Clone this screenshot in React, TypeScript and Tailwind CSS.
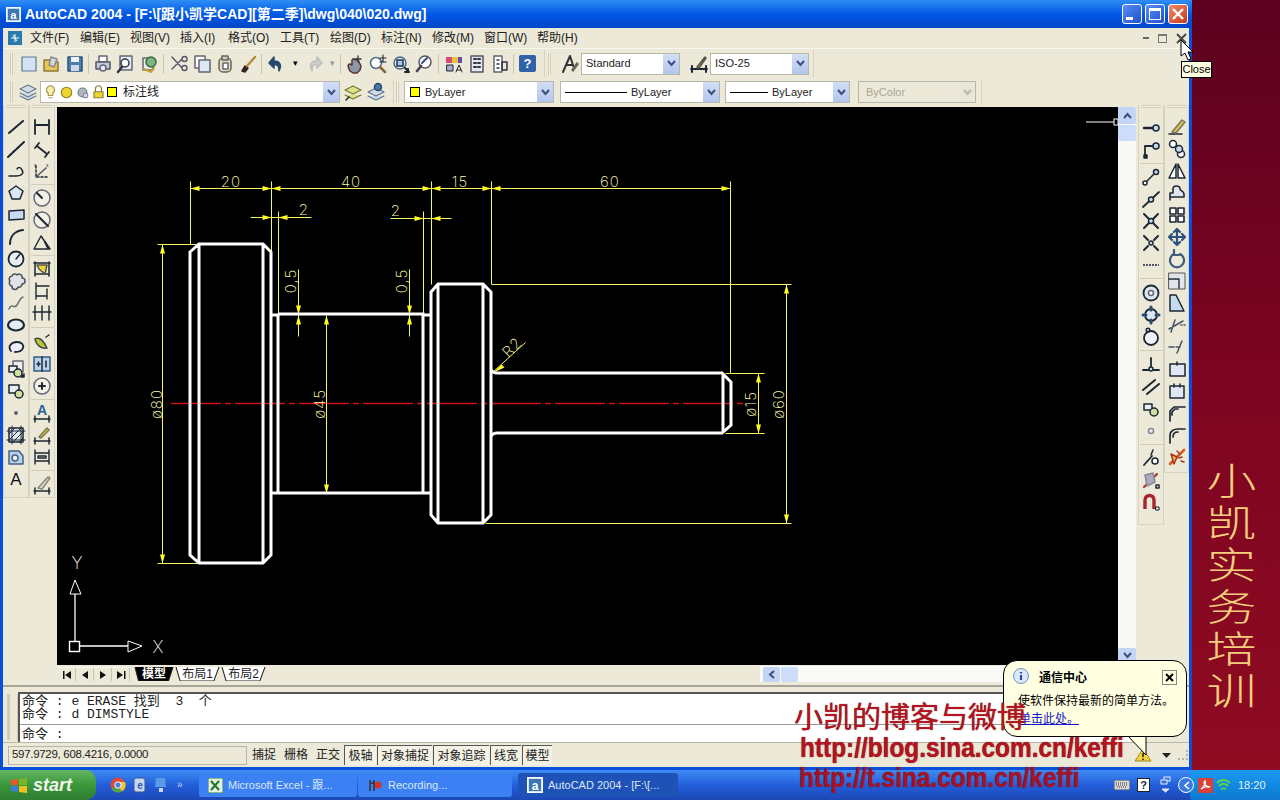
import React from "react";

const Ic = ({ children, s = 20 }: { children: React.ReactNode; s?: number }) => (
  <svg width={s} height={s} viewBox="0 0 20 20" fill="none" stroke="#1c2733" strokeWidth={1.5} strokeLinecap="round" strokeLinejoin="round">
    {children}
  </svg>
);

const yel = "#e6d63c";

// left toolbars
const drawIcons = [
  <path d="M3 16L17 4M3 16h.1M17 4h.1" strokeWidth={2} />,
  <path d="M2 18L18 3M7 13l6-5" strokeWidth={2} />,
  <path d="M3 15h7c6 0 8-3 6-6-1-3-4-3-5-1M3 15h.1" />,
  <path d="M10 3l7 5-3 8H6L3 8z" fill="#d9e6f4" />,
  <path d="M3 6l15-1v9l-15 1z" fill="#c7dbf0" />,
  <path d="M4 17C4 9 9 4 17 3" strokeWidth={2} />,
  <><circle cx="10" cy="10" r="7.5" fill="#e9eef4" strokeWidth={1.8} /><path d="M10 10l4-5" /></>,
  <path d="M6 5a3 3 0 0 1 5-1 3 3 0 0 1 5 3 3 3 0 0 1 0 6 3 3 0 0 1-4 3 3 3 0 0 1-6-1 3 3 0 0 1-2-5 3 3 0 0 1 2-5z" fill="#dfe3e6" stroke="#4a5560" />,
  <path d="M3 16c3-7 5 1 8-4s3-7 6-8" stroke="#68707a" />,
  <ellipse cx="10" cy="10" rx="8" ry="5.5" fill="#e4ecf5" strokeWidth={2.2} />,
  <path d="M5 14C1 9 6 5 11 5c5 0 7 3 6 6-1 3-5 4-8 4" strokeWidth={1.8} fill="#eef" />,
  <><rect x="7" y="2" width="10" height="11" fill="#eee" stroke="#667" /><rect x="3" y="7" width="8" height="6" fill="#e9eef4" /><circle cx="12" cy="14" r="4" fill="#cde0a0" /><path d="M15 18l3-3v3z" fill="#000" /></>,
  <><rect x="3" y="4" width="10" height="8" fill="#e9eef4" /><circle cx="13" cy="13" r="4" fill="#cde0a0" /></>,
  <circle cx="10" cy="10" r="1.2" fill="#1c2733" stroke="#667" />,
  <><rect x="3" y="3" width="14" height="14" fill="#dfe7f0" /><path d="M3 9l6-6M3 15L15 3M7 17L17 7M13 17l4-4M1 6h18M1 15h18M6 1v18M15 1v18" strokeWidth={1} /></>,
  <><path d="M3 4h10l4 5v8H3z" fill="#b9d0ea" stroke="#46617e" /><circle cx="9" cy="11" r="3" fill="#eef3f8" stroke="#46617e" /></>,
  <text x="10" y="16" fontSize="17" textAnchor="middle" fontFamily="Liberation Sans, sans-serif" fill="#111" stroke="none">A</text>,
];

const dimBase = <path d="M2 16h16M3 13v6M17 13v6" />;
const dimIcons = [
  [
    <path d="M3 3v14M17 3v14M3 8h14" strokeWidth={1.8} />,
    <path d="M3 9l4-5M13 18l4-5M5 7l10 8" strokeWidth={1.8} />,
    <><path d="M4 5v11h12" strokeDasharray="2 2" /><path d="M4 16l10-9" stroke="#556" /><text x="2" y="6" fontSize="5" stroke="none" fill="#222">x</text><text x="14" y="6" fontSize="5" stroke="none" fill="#222">x</text></>,
  ],
  [
    <><circle cx="10" cy="10" r="8" fill="#f3f1e6" stroke="#667" /><path d="M10 10L5 5" strokeWidth={2} /></>,
    <><circle cx="10" cy="10" r="8" fill="#f3f1e6" stroke="#667" /><path d="M4 4l12 12" strokeWidth={2} /></>,
    <><path d="M2 17h16L9 4 2 17" strokeWidth={1.4} /><path d="M13 10l3 6" strokeWidth={2} /></>,
  ],
  [
    <><path d="M2 4h16M3 3v14M17 3v14M3 15h14" /><path d="M5 6h10l-2 9-6-5z" fill={yel} stroke="#554" /></>,
    <path d="M4 2v16M15 8v10M4 5h13M4 15h11" strokeWidth={1.4} />,
    <path d="M3 3v14M10 3v14M17 3v14M1 9h18" strokeWidth={1.4} />,
  ],
  [
    <><path d="M3 7c5-3 9 3 12 9-6 1-11-3-12-9z" fill="#b6c72f" stroke="#445" /><path d="M14 5l3-2" /></>,
    <><rect x="2" y="3" width="16" height="14" fill="#b9d3ef" stroke="#39597c" /><path d="M10 3v14M5 10h3M6.5 8v4M14 7v6" /></>,
    <><circle cx="10" cy="10" r="8" fill="#f3f1e6" stroke="#667" /><path d="M7 10h6M10 7v6" strokeWidth={2} /></>,
  ],
  [
    <>{dimBase}<text x="10" y="12" fontSize="14" fontWeight="700" textAnchor="middle" fontFamily="Liberation Sans, sans-serif" fill="#2a5f96" stroke="none">A</text></>,
    <>{dimBase}<path d="M7 12L15 3l2 2-8 8z" fill="#e8c640" stroke="#775" /></>,
    <path d="M3 3v14M17 3v14M3 6h14M3 14h14M6 9h8v2H6z" strokeWidth={1.4} />,
  ],
  [<>{dimBase}<path d="M6 13L16 2l2 1-8 11z" fill="#ddd" stroke="#887" /></>],
];

// right toolbars
const snapIcons = [
  [
    <><path d="M3 10h10" strokeWidth={2.4} /><circle cx="15" cy="10" r="3" fill="#c7dbf0" /></>,
    <><path d="M4 17V6h8" strokeDasharray="2 1" strokeWidth={1.8} /><circle cx="15" cy="6" r="3" fill="#c7dbf0" /><rect x="3" y="15" width="3" height="3" fill="#222" /></>,
  ],
  [
    <><path d="M3 17L15 5" /><circle cx="4" cy="16" r="2" fill="#fff" /><circle cx="15" cy="5" r="2.5" fill="#c7dbf0" /></>,
    <><path d="M2 18L18 3" strokeWidth={1.8} /><circle cx="10" cy="10.5" r="2.5" fill="#c7dbf0" /></>,
    <><path d="M3 3l14 14M17 3L3 17" strokeWidth={2} /><circle cx="10" cy="10" r="2.5" fill="#c7dbf0" /></>,
    <><path d="M3 3l4 4M13 13l4 4M17 3l-4 4M7 13l-4 4" strokeWidth={2} /><circle cx="10" cy="10" r="2" fill="#c7dbf0" /></>,
    <path d="M2 10h16" strokeWidth={1.8} strokeDasharray="2 1" stroke="#556" strokeLinecap="butt" />,
  ],
  [
    <><circle cx="10" cy="10" r="7.5" fill="#dbe7f3" strokeWidth={1.8} /><circle cx="10" cy="10" r="2.5" fill="#fff" stroke="#667" /></>,
    <><circle cx="10" cy="10" r="6" fill="#dbe7f3" strokeWidth={1.8} /><path d="M10 2v3M10 15v3M2 10h3M15 10h3" strokeWidth={3} stroke="#2a4d70" /></>,
    <><circle cx="10" cy="11" r="7" fill="#eef3f8" strokeWidth={1.8} /><circle cx="7" cy="3" r="1.8" fill="#c7dbf0" /></>,
  ],
  [
    <><path d="M10 3v12M2 15h16" strokeWidth={1.8} /><circle cx="10" cy="14" r="2" fill="#c7dbf0" /></>,
    <path d="M2 13L14 3M6 17L18 7" strokeWidth={2} />,
    <><rect x="3" y="5" width="8" height="6" fill="#e9eef4" /><circle cx="13" cy="13" r="4" fill="#cde0a0" /></>,
    <circle cx="10" cy="10" r="2.5" fill="#eee" stroke="#889" />,
  ],
  [
    <><path d="M3 17L11 8" strokeWidth={1.8} /><path d="M12 2L10 7" /><circle cx="14" cy="13" r="3" fill="#fff" /></>,
    <><path d="M3 17L16 4" stroke="#b03030" strokeWidth={2.2} /><path d="M4 5l8-2 2 9-8 4z" fill="#aab" stroke="#889" /><rect x="15" y="15" width="3" height="3" fill="#fff" /></>,
    <><path d="M4 17V8c0-6 9-6 9 0v9" stroke="#a8242c" strokeWidth={3.4} strokeLinecap="butt" /><rect x="15" y="15" width="3" height="3" fill="#fff" stroke="#111" strokeWidth={1} /></>,
  ],
];

const modIcons = [
  <><path d="M2 17h13" /><path d="M5 15L15 3l3 2-9 11z" fill="#e2c24a" stroke="#776" /></>,
  <><circle cx="6" cy="5" r="3.5" fill="#fff" /><circle cx="14" cy="15" r="3.5" fill="#fff" /><circle cx="12" cy="10" r="3.5" fill="#c7dbf0" /></>,
  <><path d="M9 3L2 17h7zM11 3l7 14h-7z" fill="#fff" /></>,
  <path d="M3 17V10h3V6c0-4 7-4 7 0 0 2 4 2 4 5v3H3" fill="#dfe7f0" strokeWidth={1.6} />,
  <path d="M3 3h6v6H3zM11 3h6v6h-6zM3 11h6v6H3zM11 11h6v6h-6z" fill="#fff" strokeWidth={1.6} />,
  <path d="M10 2v16M2 10h16M7 5l3-3 3 3M7 15l3 3 3-3M5 7l-3 3 3 3M15 7l3 3-3 3" stroke="#2a527d" strokeWidth={2.2} />,
  <path d="M7 5a7 7 0 1 0 6 0M7 1v5h5" stroke="#3e5d7b" strokeWidth={2.2} />,
  <><rect x="2" y="2" width="16" height="16" fill="#e2e6ea" stroke="#555" strokeWidth={1} /><path d="M2 8h10v10" strokeDasharray="1 1" /></>,
  <path d="M3 2h6l8 16H3z" fill="#c7dbf0" strokeDasharray="0" />,
  <path d="M2 14L16 6M8 5l-4 12M14 10h1M17 10h1" stroke="#456" />,
  <path d="M2 10h5M9 10h4M15 4l-5 12" stroke="#456" />,
  <><rect x="3" y="5" width="15" height="12" fill="#dfe7f0" /><path d="M10 3v3" /></>,
  <><path d="M3 5h14v12H3z" fill="#dfe7f0" /><path d="M7 3v3M13 3v3" /></>,
  <path d="M3 18V8l4-4h11M5 12v-3l3-3h3" strokeWidth={1.7} />,
  <path d="M3 18V10c0-4 4-6 8-6h7M6 12c0-3 2-5 5-5" strokeWidth={1.7} />,
  <><path d="M3 17L17 3" stroke="#d06020" strokeWidth={2.6} /><path d="M4 7l6 3-3 7zM10 4l3 3M14 14l3 1M12 11l3-1" stroke="#a83020" fill="#e3b840" strokeWidth={1.4} /></>,
];

// top toolbars
const stdIcons = {
  a: [
    <path d="M3 3h14v14H3z" fill="#d3e3f4" stroke="#5b7894" strokeWidth={1.2} />,
    <><path d="M2 6h6l2 2h6v9H2z" fill="#e8c45a" stroke="#8a7a3a" /><path d="M9 3l6 2-3 8-5-2z" fill="#cfd8e2" stroke="#8a8a8a" /></>,
    <><path d="M3 3h14v14H3z" fill="#4f7cae" stroke="#2f5078" /><path d="M6 3h8v5H6z" fill="#eef3f8" stroke="none" /><rect x="6" y="11" width="8" height="6" fill="#cdd9e6" stroke="none" /></>,
  ],
  b: [
    <><path d="M6 2h8v6H6z" fill="#fff" stroke="#667" /><path d="M3 8h14v7H3z" fill="#c2cdd8" stroke="#556" /><circle cx="10" cy="14" r="3" fill="#e9eef4" stroke="#667" /></>,
    <><path d="M4 2h12v14H4z" fill="#e6edf4" stroke="#667" /><circle cx="9" cy="9" r="4" fill="#fff" stroke="#334" /><path d="M6 13l-4 5" strokeWidth={2.4} stroke="#334" /></>,
    <><path d="M4 4h10v12H4z" fill="#e9eef4" stroke="#667" /><circle cx="12" cy="8" r="5" fill="#7fb37f" stroke="#3b6a3b" /><path d="M5 15l7 3 3-4" stroke="#c8a030" strokeWidth={2} /></>,
  ],
  c: [
    <path d="M3 3l10 11M3 15L13 5M13 14a2.5 2.5 0 1 0 5 0 2.5 2.5 0 1 0-5 0M13 5a2.5 2.5 0 1 0 5 0 2.5 2.5 0 1 0-5 0" stroke="#556" strokeWidth={1.4} />,
    <><rect x="3" y="2" width="10" height="12" fill="#fff" stroke="#667" /><rect x="7" y="6" width="11" height="12" fill="#dbe7f3" stroke="#667" /></>,
    <><rect x="4" y="4" width="12" height="14" rx="4" fill="#e4dcc0" stroke="#665" /><rect x="7" y="2" width="6" height="4" fill="#ccc" stroke="#665" /><rect x="8" y="9" width="5" height="6" fill="#fff" stroke="#667" /></>,
    <><path d="M4 17l3-5 3 2-3 4z" fill="#322" stroke="#322" /><path d="M9 12l8-9" stroke="#b48a3a" strokeWidth={2.4} /></>,
  ],
};

const zoomIcons = [
  <><path d="M5 17c-3-5-2-7 0-7l2 1V6c1-2 3-1 3 0 1-1 4 0 4 2l2 4-1 4-3 3H8z" fill="#8c98a6" stroke="#5a3030" /><path d="M13 2v6M10 5h6" stroke="#333" strokeWidth={1.3} /></>,
  <><circle cx="8" cy="9" r="5.5" fill="#fff" stroke="#4b6a88" /><path d="M12 13l5 5" strokeWidth={2.6} stroke="#8a6a3a" /><path d="M15 1v6M12 4h6M12 8h6" strokeWidth={1.1} /></>,
  <><circle cx="9" cy="9" r="6" fill="#dfe9f4" stroke="#4b6a88" /><rect x="6" y="6" width="6" height="6" stroke="#234" fill="#a9c7ea" /><path d="M14 14l4 4M17 15v3h-3" strokeWidth={2} /></>,
  <><circle cx="11" cy="8" r="6" fill="#fff" stroke="#556" /><path d="M7 12l-4 5" strokeWidth={2.6} stroke="#445" /><path d="M8 9l5-5" stroke="#2a527d" strokeWidth={2} /></>,
];

const Sep = ({ className = "w-[5px]" }: { className?: string }) => (
  <div className={`${className} flex justify-center`}>
    <div className="h-[20px] w-[1px] bg-[#c9c5b2]" />
  </div>
);
const Tb = ({ children }: { children: React.ReactNode }) => (
  <div className="flex h-[23px] w-[23px] items-center justify-center">{children}</div>
);
const Grip = () => (
  <div className="flex h-full w-[6px] items-center">
    <div className="h-[22px] w-[3px] border-x border-[#d0ccb8] bg-[#f6f4ea]" />
  </div>
);
const Chevron = ({ off }: { off?: boolean }) => (
  <div className={`flex h-full w-[16px] items-center justify-center ${off ? "bg-[#e8e6d8]" : "bg-gradient-to-b from-[#d3def6] to-[#b2c6ee]"}`}>
    <svg width="9" height="7" viewBox="0 0 9 7" fill="none" stroke={off ? "#b8b6a8" : "#3a4e80"} strokeWidth={2}>
      <path d="M1 1l3.500 4L8 1" />
    </svg>
  </div>
);
const Combo = ({ className, children, off }: { className: string; children: React.ReactNode; off?: boolean }) => (
  <div className={`flex h-[22px] items-center justify-between border border-[#b9b7a8] text-[11px] ${off ? "bg-[#ece9d8] text-[#a8a696]" : "bg-white text-[#222]"} ${className}`}>
    <div className="flex min-w-0 flex-1 items-center">{children}</div>
    <Chevron off={off} />
  </div>
);
const YelSq = () => <div className="h-[10px] w-[10px] border border-black bg-[#ffff00]" />;

const VTool = ({ top, groups, className }: { top: string; groups: [string, React.ReactNode[]][]; className: string }) => (
  <div className={`flex flex-col items-center border-x border-b border-[#d6d2c0] ${className}`}>
    <div className="mx-[2px] h-[3px] w-[20px] self-center border-y border-[#d0ccb8] bg-[#f6f4ea]" />
    <div className={top}>
      {groups.map(([cls, items], i) => (
        <div key={i} className={cls}>
          {items.map((it, j) => (
            <div key={j} className="flex h-[22px] w-[23px] items-center justify-center">
              <Ic>{it}</Ic>
            </div>
          ))}
        </div>
      ))}
    </div>
  </div>
);

const rail = (a: number, b: number, y: number) => `M${a} ${y}H${b}`;
const post = (x: number, a: number, b: number) => `M${x} ${a}V${b}`;

const hArrow = (tip: number, y: number, dir: number) => `${tip},${y} ${tip + dir * 9},${y - 2.5} ${tip + dir * 9},${y + 2.5}`;
const vArrow = (x: number, tip: number, dir: number) => `${x},${tip} ${x - 2.5},${tip + dir * 9} ${x + 2.5},${tip + dir * 9}`;

const DimText = ({ x, y, t, r }: { x: number; y: number; t: string; r?: number }) => (
  <text
    x={x}
    y={y}
    fontSize="15"
    textAnchor="middle"
    dominantBaseline="central"
    fill="#ffffa8"
    fontFamily="Inter, sans-serif"
    fontWeight="200"
    letterSpacing="1"
    transform={r ? `rotate(${r} ${x} ${y})` : undefined}
  >
    {t}
  </text>
);

const Drawing = () => {
  const dims = [
    post(190, 181, 244), post(271, 181, 252), post(431, 181, 284), post(491, 181, 284), post(730, 181, 373),
    rail(190, 730, 188),
    rail(250, 311, 217), post(278, 211, 314),
    rail(390, 451, 218), post(423, 211, 314),
    post(298, 269, 336), post(409, 269, 336), rail(280, 423, 314),
    post(326, 315, 493), rail(278, 335, 493),
    post(162, 244, 563), rail(157, 197, 244), rail(157, 197, 563),
    rail(491, 791, 284), rail(485, 791, 523), post(786, 284, 523),
    rail(725, 764, 373), rail(725, 764, 433), post(758, 373, 433),
    "M493 371L525 342",
  ].join("");
  const arrows = [
    hArrow(190, 188, 1), hArrow(271, 188, -1), hArrow(271, 188, 1), hArrow(431, 188, -1), hArrow(431, 188, 1), hArrow(491, 188, -1), hArrow(491, 188, 1), hArrow(730, 188, -1),
    hArrow(271, 217, -1), hArrow(278, 217, 1), hArrow(423, 218, -1), hArrow(431, 218, 1),
    vArrow(298, 314, -1), vArrow(298, 315, 1), vArrow(409, 314, -1), vArrow(409, 315, 1),
    vArrow(326, 315, 1), vArrow(326, 493, -1), vArrow(162, 244, 1), vArrow(162, 563, -1),
    vArrow(786, 284, 1), vArrow(786, 523, -1), vArrow(758, 373, 1), vArrow(758, 433, -1),
    "493,372 501,364 504,367",
  ];
  return (
    <svg width="1061" height="558" viewBox="57 107 1061 558" className="block">
      <path d="M171 403.500H745" stroke="#d01414" strokeWidth={1.4} strokeDasharray="50 4 6 4" />
      <g transform="translate(0.5 0.5)">
        <path d={dims} stroke="#f6f660" strokeWidth={1} fill="none" />
        {arrows.map((p, i) => (
          <polygon key={i} points={p} fill="#ffff20" />
        ))}
      </g>
      <g fill="none" stroke="#fff" strokeWidth={3} strokeLinejoin="miter">
        <path d="M190 252L199 244H263L271 252V555L263 563H199L190 555Z M199 244V563 M263 244V563" />
        <path d="M271 315H278V493H271 M278 314H423V493H278 M423 315H431 M423 493H431" />
        <path d="M431 292L438 284H483L491 292V515L483 523H438L431 515Z M438 284V523 M483 284V523" />
        <path d="M491 370Q493 373 497 373H722L731 382V425L722 433H497Q493 433 491 436 M723 373V433" />
      </g>
      <DimText x={231} y={181} t="20" />
      <DimText x={351} y={181} t="40" />
      <DimText x={460} y={181} t="15" />
      <DimText x={610} y={181} t="60" />
      <DimText x={304} y={209} t="2" />
      <DimText x={396} y={210} t="2" />
      <DimText x={290} y={281} t="0,5" r={-90} />
      <DimText x={401} y={281} t="0,5" r={-90} />
      <DimText x={319} y={404} t="ø45" r={-90} />
      <DimText x={156} y={404} t="ø80" r={-90} />
      <DimText x={750} y={404} t="ø15" r={-90} />
      <DimText x={778} y={404} t="ø60" r={-90} />
      <DimText x={512} y={347} t="R2" r={-45} />
      <g stroke="#fff" fill="none" strokeWidth={1}>
        <rect x="69.500" y="641.500" width="10" height="10" strokeWidth={1.4} />
        <path d="M75 641V594M80 646H128" strokeWidth={1.3} />
        <path d="M75 580L70 594H81Z M128 641L142 646L128 652Z" />
        <path d="M1086 122H1114" />
        <rect x="1114" y="119" width="4" height="6" />
      </g>
      <text x={77} y={563} fontSize="17" textAnchor="middle" dominantBaseline="central" fill="#f4f4f4" fontFamily="Inter, sans-serif" fontWeight="200">Y</text>
      <text x={158} y={647} fontSize="17" textAnchor="middle" dominantBaseline="central" fill="#f4f4f4" fontFamily="Inter, sans-serif" fontWeight="200">X</text>
    </svg>
  );
};

const Nav = ({ d }: { d: string }) => (
  <div className="flex h-[13px] w-[18px] items-center justify-center border-r border-[#c8c4b0]">
    <svg width="10" height="10" viewBox="0 0 10 10" fill="#111"><path d={d} /></svg>
  </div>
);

const Tab = ({ t, on, className }: { t: string; on?: boolean; className: string }) => (
  <div className={`relative flex h-[14px] items-center justify-center ${className}`}>
    <svg width="100%" height="14" viewBox="0 0 44 14" preserveAspectRatio="none" className="absolute inset-0">
      <path d="M1 0L5 14H38L43 0" fill={on ? "#000" : "#fff"} stroke="#222" />
    </svg>
    <span className={`relative text-[12px] leading-none ${on ? "font-bold text-white" : "text-[#222]"}`}>{t}</span>
  </div>
);

const StatusBtn = ({ t, on, className }: { t: string; on?: boolean; className: string }) => (
  <div className={`flex h-[20px] items-center justify-center text-[12px] text-[#222] ${on ? "border-l border-t border-[#555] bg-[#f4f2e6]" : ""} ${className}`}>{t}</div>
);

const TaskBtn = ({ icon, t, className }: { icon: React.ReactNode; t: string; className: string }) => (
  <div className={`flex h-[24px] items-center gap-[5px] rounded-[3px] pl-[9px] text-[11px] ${className}`}>
    {icon}
    <span className="whitespace-nowrap">{t}</span>
  </div>
);

const AcadLogo = ({ s }: { s: number }) => (
  <svg width={s} height={s} viewBox="0 0 16 16">
    <rect x="0.500" y="0.500" width="15" height="15" fill="#d8e4f0" stroke="#fff" />
    <rect x="2" y="2" width="12" height="12" fill="#3d78b4" />
    <text x="8" y="12.500" fontSize="12" fontWeight="700" textAnchor="middle" fill="#fff" fontFamily="Liberation Sans, sans-serif">a</text>
  </svg>
);

const menus = [
  ["文件(F)", "w-[50px]"], ["编辑(E)", "w-[50px]"], ["视图(V)", "w-[50px]"], ["插入(I)", "w-[48px]"], ["格式(O)", "w-[52px]"], ["工具(T)", "w-[50px]"],
  ["绘图(D)", "w-[51px]"], ["标注(N)", "w-[51px]"], ["修改(M)", "w-[52px]"], ["窗口(W)", "w-[53px]"], ["帮助(H)", "w-[50px]"],
];

const App = () => {
  return (
    <div className="relative flex h-[800px] w-[1280px] flex-col overflow-hidden font-['Liberation_Sans','Noto_Sans_CJK_SC',sans-serif]">
      <div className="flex h-[770px]">
        <div className="flex h-full w-[1192px] flex-col bg-[#0a4fdc] px-[3px] pb-[3px]">
          {/* title bar */}
          <div className="-mx-[3px] flex h-[28px] shrink-0 items-center bg-gradient-to-b from-[#2f8df5] via-[#0258e4] to-[#0246c8] pl-[6px] pr-[4px]">
            <AcadLogo s={15} />
            <span className="ml-[4px] text-[14px] font-bold text-white">AutoCAD 2004 - [F:\[跟小凯学CAD][第二季]\dwg\040\020.dwg]</span>
            <div className="ml-auto flex gap-[3px]">
              <div className="flex h-[20px] w-[20px] items-end rounded-[3px] border border-white bg-gradient-to-br from-[#5b8df2] to-[#1b50d0] p-[3px]"><div className="h-[3px] w-[7px] bg-white" /></div>
              <div className="h-[20px] w-[20px] rounded-[3px] border border-white bg-gradient-to-br from-[#5b8df2] to-[#1b50d0] p-[3px]"><div className="h-full w-full border-[1.500px] border-t-[3px] border-white" /></div>
              <div className="flex h-[20px] w-[20px] items-center justify-center rounded-[3px] border border-white bg-gradient-to-br from-[#ee8a6a] to-[#c83412]">
                <svg width="12" height="12" viewBox="0 0 12 12" stroke="#fff" strokeWidth={2.4}><path d="M1 1l10 10M11 1L1 11" /></svg>
              </div>
            </div>
          </div>

          <div className="flex min-h-0 flex-1 flex-col bg-[#ece9d8]">
            {/* menu */}
            <div className="flex h-[20px] shrink-0 items-center pl-[5px] text-[12px] text-[#222]">
              <div className="mr-[8px] flex h-[14px] w-[14px] items-center justify-center bg-[#2a7ab0]">
                <svg width="10" height="10" viewBox="0 0 10 10" stroke="#fff" strokeWidth={1}><path d="M1 5h8M5 1v8M3 2l4 6" /></svg>
              </div>
              {menus.map(([t, w]) => (
                <div key={t} className={`${w} whitespace-nowrap`}>{t}</div>
              ))}
              <div className="ml-auto flex items-center gap-[9px] pr-[2px] text-[#666]">
                <div className="mb-[5px] h-[2px] w-[6px] self-end bg-[#666]" />
                <div className="relative h-[9px] w-[9px] border border-t-2 border-[#777]" />
                <svg width="11" height="11" viewBox="0 0 11 11" stroke="#444" strokeWidth={1.8}><path d="M1 1l9 9M10 1l-9 9" /></svg>
              </div>
            </div>

            {/* standard toolbar */}
            <div className="flex h-[29px] shrink-0 items-center border-t border-[#f8f7f0] pl-[7px] pt-[1px]">
              <Grip />
              <div className="flex items-center pl-[1px]">
                {stdIcons.a.map((x, i) => <Tb key={i}><Ic>{x}</Ic></Tb>)}
                <Sep />
                {stdIcons.b.map((x, i) => <Tb key={i}><Ic>{x}</Ic></Tb>)}
                <Sep className="w-[7px]" />
                {stdIcons.c.map((x, i) => <Tb key={i}><Ic>{x}</Ic></Tb>)}
                <Sep />
                <Tb>
                  <Ic><path d="M8 3L3 9l5 5v-3c4-1 5 1 5 6 3-6 1-10-5-10z" fill="#27486e" stroke="#27486e" /></Ic>
                </Tb>
                <div className="flex w-[16px] justify-center text-[9px] leading-none">▾</div>
                <Tb>
                  <Ic><path d="M12 3l5 6-5 5v-3c-4-1-5 1-5 6-3-6-1-10 5-10z" fill="#ccd0cc" stroke="#bcc0bc" /></Ic>
                </Tb>
                <div className="flex w-[12px] justify-center text-[9px] leading-none text-[#999]">▾</div>
                <Sep />
                {zoomIcons.map((x, i) => <Tb key={i}><Ic>{x}</Ic></Tb>)}
                <Sep className="w-[7px]" />
                <Tb>
                  <Ic>
                    <path d="M2 3h6v6H2z" fill="#d84a7a" stroke="none" /><path d="M8 3h6v6H8z" fill="#e8c63a" stroke="none" /><path d="M14 3h4v6h-4z" fill="#6a4ab8" stroke="none" />
                    <path d="M3 11h6v6H3z" fill="#aac" strokeWidth={1} /><path d="M12 18l3-7 3 7M13 16h4" strokeWidth={1} />
                  </Ic>
                </Tb>
                <Tb><Ic><path d="M4 2h12v16H4z" fill="#e3e8ee" stroke="#556" /><path d="M7 5h2M11 5h2M7 9h2M11 9h2M7 13h2M11 13h2" strokeWidth={2} stroke="#334" /></Ic></Tb>
                <Tb><Ic><path d="M4 2h8v16H4z" fill="#fff" stroke="#667" /><path d="M12 8h5v8h-5zM7 6h2M7 10h2M7 14h2" stroke="#334" /></Ic></Tb>
                <Sep />
                <Tb>
                  <div className="flex h-[17px] w-[17px] items-center justify-center rounded-[2px] bg-[#2f62a8] text-[13px] font-bold leading-none text-white">?</div>
                </Tb>
              </div>
              <div className="ml-[5px] h-full w-[1px] bg-[#d8d4c4]" />
              <div className="ml-[3px]"><Grip /></div>
              <div className="flex items-center">
                <div className="ml-[4px]"><Tb><Ic><path d="M3 18L10 2l4 12M6 11h7" strokeWidth={2} stroke="#333" /><path d="M12 16l5-7 1 1-5 7z" fill="#d8b84a" stroke="#665" /></Ic></Tb></div>
                <Combo className="w-[99px]"><span className="pl-[4px]">Standard</span></Combo>
                <div className="ml-[7px]"><Tb><Ic><path d="M2 15h16M3 12v6M17 12v6" strokeWidth={2} /><path d="M8 13L16 3l1 1-7 10z" fill="#cdb040" stroke="#554" /></Ic></Tb></div>
                <Combo className="w-[99px]"><span className="pl-[4px]">ISO-25</span></Combo>
              </div>
              <div className="ml-[4px] h-full w-[1px] bg-[#d8d4c4]" />
            </div>

            {/* layers + properties toolbar */}
            <div className="flex h-[28px] shrink-0 items-center pl-[7px] pt-[2px]">
              <Grip />
              <div className="flex w-[24px] justify-center">
                <Ic><path d="M2 7l8-4 8 4-8 4zM2 11l8 4 8-4M2 14l8 4 8-4" fill="#cfdcea" stroke="#66788a" strokeWidth={1.1} /></Ic>
              </div>
              <Combo className="w-[300px]">
                <div className="flex items-center gap-[1px] pl-[2px]">
                  <Ic s={15}><path d="M10 1a5.500 5.500 0 0 0-3 10v3h6v-3a5.500 5.500 0 0 0-3-10zM8 17h4" fill="#f6f0a8" stroke="#a09850" /></Ic>
                  <Ic s={15}><circle cx="10" cy="10" r="7" fill="#ecd62c" stroke="#8f7e20" /></Ic>
                  <Ic s={15}><circle cx="10" cy="10" r="6" fill="#aeb6bc" stroke="#6e7a84" /><circle cx="14" cy="14" r="3" fill="#dde" stroke="#889" /></Ic>
                  <Ic s={15}><path d="M6 9V5a4 4 0 0 1 8 0v4" stroke="#8a7a30" /><rect x="4" y="9" width="12" height="8" fill="#ecd62c" stroke="#8a7a30" /></Ic>
                </div>
                <div className="ml-[1px]"><YelSq /></div>
                <span className="ml-[6px] text-[12px]">标注线</span>
              </Combo>
              <div className="ml-[1px] flex">
                <Tb><Ic><path d="M2 8l8-4 8 4-8 4zM2 13l8 4 8-4" fill="#dfe08a" stroke="#6e7a30" strokeWidth={1.1} /><path d="M3 18l3-3" stroke="#222" /></Ic></Tb>
                <Tb><Ic><path d="M2 10l8-4 8 4-8 4zM2 14l8 4 8-4" fill="#cfdcea" stroke="#5a7090" strokeWidth={1.1} /><circle cx="12" cy="5" r="3.500" fill="#4a76a8" stroke="#2a4d70" /></Ic></Tb>
              </div>
              <div className="ml-[6px] h-full w-[1px] bg-[#d8d4c4]" />
              <div className="ml-[2px]"><Grip /></div>
              <Combo className="ml-[2px] w-[150px]">
                <div className="ml-[5px]"><YelSq /></div>
                <span className="ml-[5px]">ByLayer</span>
              </Combo>
              <Combo className="ml-[6px] w-[160px]">
                <div className="ml-[4px] h-[1px] w-[62px] bg-black" />
                <span className="ml-[4px]">ByLayer</span>
              </Combo>
              <Combo className="ml-[5px] w-[125px]">
                <div className="ml-[4px] h-[1px] w-[38px] bg-black" />
                <span className="ml-[4px]">ByLayer</span>
              </Combo>
              <Combo off className="ml-[8px] w-[118px]">
                <span className="pl-[7px]">ByColor</span>
              </Combo>
              <div className="ml-[5px] h-full w-[1px] bg-[#d8d4c4]" />
            </div>

            {/* middle */}
            <div className="flex h-[580px] shrink-0">
              <div className="flex w-[54px] shrink-0 items-start">
                <VTool className="h-[393px] w-[26px]" top="mt-[8px]" groups={[["", drawIcons]]} />
                <VTool
                  className="h-[393px] w-[26px]"
                  top="mt-[8px]"
                  groups={[
                    ["", dimIcons[0]],
                    ["mt-[2px] border-t border-[#d0ccb8] pt-[2px]", dimIcons[1]],
                    ["mt-[2px] border-t border-[#d0ccb8] pt-[2px]", dimIcons[2]],
                    ["mt-[3px] border-t border-[#d0ccb8] pt-[3px]", dimIcons[3]],
                    ["mt-[2px] border-t border-[#d0ccb8] pt-[2px]", dimIcons[4]],
                    ["mt-[2px] border-t border-[#d0ccb8] pt-[3px]", dimIcons[5]],
                  ]}
                />
              </div>

              <div className="flex w-[1079px] shrink-0 flex-col pt-[2px]">
                <div className="flex h-[558px] shrink-0">
                  <div className="h-full w-[1061px] bg-black"><Drawing /></div>
                  <div className="flex w-[18px] flex-col bg-[#f8f8f4] pb-[2px]">
                    <div className="flex h-[17px] items-center justify-center rounded-[2px] bg-[#c3d4f4]">
                      <svg width="9" height="7" viewBox="0 0 9 7" fill="none" stroke="#3a4e80" strokeWidth={2}><path d="M1 6l3.500-4L8 6" /></svg>
                    </div>
                    <div className="mt-[1px] h-[16px] rounded-[2px] bg-[#cddcf8]" />
                    <div className="flex-1" />
                    <div className="flex h-[15px] items-center justify-center rounded-[2px] bg-[#c3d4f4]">
                      <svg width="9" height="7" viewBox="0 0 9 7" fill="none" stroke="#3a4e80" strokeWidth={2}><path d="M1 1l3.500 4L8 1" /></svg>
                    </div>
                  </div>
                </div>
                <div className="flex h-[18px] items-center">
                  <div className="ml-[1px] flex h-[15px] items-center border-t border-[#f8f7f0]">
                    <Nav d="M1 1h1.500v8H1zM9 1v8L3 5z" />
                    <Nav d="M8 1v8L2 5z" />
                    <Nav d="M2 1v8l6-4z" />
                    <Nav d="M1 1v8l6-4zM8 1h1.500v8H8z" />
                  </div>
                  <div className="ml-[4px] flex">
                    <Tab t="模型" on className="w-[40px]" />
                    <Tab t="布局1" className="ml-[1px] w-[45px]" />
                    <Tab t="布局2" className="ml-[1px] w-[45px]" />
                  </div>
                  <div className="ml-auto mr-[18px] flex h-[16px] w-[358px] items-center bg-[#f9f9f5] pl-[3px]">
                    <div className="flex h-[15px] w-[17px] items-center justify-center rounded-[2px] bg-[#c3d4f4]">
                      <svg width="7" height="9" viewBox="0 0 7 9" fill="none" stroke="#3a4e80" strokeWidth={2}><path d="M6 1L2 4.500 6 8" /></svg>
                    </div>
                    <div className="ml-[1px] h-[15px] w-[17px] rounded-[2px] bg-[#cddcf8]" />
                  </div>
                </div>
              </div>

              <div className="ml-[2px] flex min-w-0 flex-1 items-start">
                <VTool
                  className="h-[420px] w-[26px]"
                  top="mt-[9px]"
                  groups={[
                    ["", snapIcons[0]],
                    ["mt-[2px] border-t border-[#d0ccb8] pt-[2px]", snapIcons[1]],
                    ["mt-[2px] border-t border-[#d0ccb8] pt-[3px]", snapIcons[2]],
                    ["mt-[2px] border-t border-[#d0ccb8] pt-[3px]", snapIcons[3]],
                    ["mt-[2px] border-t border-[#d0ccb8] pt-[2px]", snapIcons[4]],
                  ]}
                />
                <VTool className="h-[368px] w-[25px]" top="mt-[8px]" groups={[["", modIcons]]} />
              </div>
            </div>

            {/* command line */}
            <div className="flex h-[57px] shrink-0 border-t-2 border-[#a8a698] pl-[4px]">
              <div className="mt-[7px] h-[46px] w-[11px] border-r border-l-[3px] border-[#cfcbb8]" />
              <div className="mt-[5px] flex h-[50px] w-[1116px] flex-col border-l-2 border-t-2 border-[#555] bg-white pl-[2px] font-['Liberation_Mono','Noto_Sans_CJK_SC',monospace] text-[13px] leading-[13px] text-[#222]">
                <div className="mt-[1px] whitespace-pre">命令 : e ERASE 找到  3  个</div>
                <div className="whitespace-pre">命令 : d DIMSTYLE</div>
                <div className="-ml-[2px] mt-[3px] h-[1px] bg-[#999]" />
                <div className="mt-[3px] whitespace-pre">命令 :</div>
              </div>
            </div>

            {/* status bar */}
            <div className="flex min-h-0 flex-1 items-center border-t border-[#b8b6a6] pl-[5px] text-[12px]">
              <div className="flex h-[19px] w-[239px] items-center border border-[#b8b6a6] pl-[3px] text-[11.500px] tracking-[-0.3px] text-[#222]">597.9729, 608.4216, 0.0000</div>
              <div className="ml-[1px] flex items-center">
                <StatusBtn t="捕捉" className="w-[32px]" />
                <StatusBtn t="栅格" className="w-[32px]" />
                <StatusBtn t="正交" className="w-[32px]" />
                <StatusBtn t="极轴" on className="w-[32px]" />
                <StatusBtn t="对象捕捉" on className="ml-[1px] w-[55px]" />
                <StatusBtn t="对象追踪" on className="ml-[1px] w-[56px]" />
                <StatusBtn t="线宽" on className="ml-[1px] w-[31px]" />
                <StatusBtn t="模型" on className="ml-[1px] w-[30px]" />
              </div>
              <div className="ml-auto flex items-center pr-[1px]">
                <svg width="18" height="14" viewBox="0 0 18 14">
                  <path d="M9 1L17 13H1z" fill="#f4d23c" stroke="#a08820" />
                  <path d="M9 5v4M9 10.500v1.500" stroke="#222" strokeWidth={1.600} />
                </svg>
                <svg className="ml-[10px]" width="9" height="6" viewBox="0 0 9 6" fill="#222"><path d="M0 1h9L4.500 6z" /></svg>
                <div className="ml-[7px] h-[10px] w-[10px] border-b-2 border-r-2 border-dotted border-[#b8b6a6]" />
              </div>
            </div>
          </div>
        </div>

        {/* red side panel */}
        <div className="flex w-[88px] flex-col items-center bg-gradient-to-b from-[#5c0220] via-[#7d0420] to-[#8f0c22] pt-[458px] font-['Noto_Sans_CJK_SC',sans-serif] text-[37px] font-light leading-[42px] text-[#f6cf7e]">
          {["小", "凯", "实", "务", "培", "训"].map((t) => (
            <div key={t} className="h-[42px] -translate-x-[5px] scale-x-[1.350]">{t}</div>
          ))}
        </div>
      </div>

      {/* taskbar */}
      <div className="flex h-[30px] items-center bg-gradient-to-b from-[#3f8cf3] via-[#245edb] to-[#1c48b4] text-[11px] text-[#dbe6fa]">
        <div className="flex h-full w-[96px] items-center rounded-r-[10px] bg-gradient-to-b from-[#63b463] via-[#3a983a] to-[#2f7d32] pl-[10px]">
          <svg width="18" height="17" viewBox="0 0 18 17">
            <path d="M1 3l7-1v6H1z" fill="#e8562a" /><path d="M9 2l8-1v7H9z" fill="#76b82a" /><path d="M1 9h7v6l-7-1z" fill="#3a7fd8" /><path d="M9 9h8v7l-8-1z" fill="#f0c020" />
          </svg>
          <span className="ml-[5px] text-[18px] font-bold italic text-[#f2f6ee]">start</span>
        </div>
        <div className="ml-[14px] flex w-[89px] items-center gap-[6px]">
          <svg width="16" height="16" viewBox="0 0 16 16">
            <circle cx="8" cy="8" r="7.500" fill="#dd4a3a" /><path d="M8 8L1.500 12A7.500 7.500 0 0 0 12 14.300z" fill="#4aa84a" /><path d="M8 8l4 6.300A7.500 7.500 0 0 0 15 5H8z" fill="#f0c62a" /><circle cx="8" cy="8" r="3.200" fill="#4a80e0" stroke="#fff" />
          </svg>
          <svg width="16" height="16" viewBox="0 0 16 16">
            <rect x="2" y="1" width="11" height="14" rx="2" fill="#c6d6ee" stroke="#3a5a90" /><text x="8" y="12" fontSize="10" fontWeight="700" textAnchor="middle" fill="#2a5aa0" fontFamily="Liberation Sans, sans-serif">e</text>
          </svg>
          <svg width="14" height="16" viewBox="0 0 14 16">
            <path d="M2 1h9l1 9H1z" fill="#5a9ae8" /><path d="M5 11h4v4H5z" fill="#c8d8f0" />
          </svg>
          <span className="ml-[3px] text-[10px] leading-none text-[#c8d8f6]">»</span>
        </div>
        <TaskBtn
          className="w-[158px] bg-[#3c81f3]"
          icon={<svg width="15" height="15" viewBox="0 0 15 15"><rect width="15" height="15" fill="#e8f0e0" stroke="#2a7a3a" /><path d="M3 3l8 9M11 3l-8 9" stroke="#1a7a30" strokeWidth={2} /></svg>}
          t="Microsoft Excel - 跟..."
        />
        <TaskBtn
          className="ml-[1px] w-[154px] bg-[#3c81f3]"
          icon={<svg width="16" height="15" viewBox="0 0 16 15"><circle cx="11" cy="7" r="3.500" fill="#d83020" /><path d="M3 2v11M7 2v11M3 5h4" stroke="#333" strokeWidth={1.500} /></svg>}
          t="Recording..."
        />
        <TaskBtn className="ml-[6px] w-[160px] bg-[#1e52b7]" icon={<AcadLogo s={16} />} t="AutoCAD 2004 - [F:\[..." />
        <div className="ml-auto flex h-full items-center">
          <div className="flex items-center pr-[19px]">
            <svg width="16" height="10" viewBox="0 0 16 10"><rect width="16" height="10" fill="#d8d8d8" stroke="#444" /><path d="M2 3h12M2 5h12M3 7h10" stroke="#333" strokeDasharray="1 1" /></svg>
            <div className="ml-[7px] flex h-[14px] w-[13px] items-center justify-center border border-[#222] bg-white text-[11px] font-bold leading-none text-[#224]">?</div>
            <svg className="ml-[10px]" width="11" height="18" viewBox="0 0 11 18" fill="none" stroke="#e8eef8"><rect x="4" y="1" width="6" height="4" /><rect x="1" y="4" width="6" height="4" fill="#3a6ad8" /><path d="M2 13h7l-3.500 3z" fill="#d8e4f8" /></svg>
          </div>
          <div className="flex h-full w-[90px] items-center rounded-l-[3px] bg-gradient-to-b from-[#1c9aee] via-[#1089e2] to-[#0f78cc]">
            <div className="-ml-[12px] flex h-[16px] w-[16px] items-center justify-center rounded-full border border-white bg-[#3a7ae0]">
              <svg width="7" height="9" viewBox="0 0 7 9" fill="none" stroke="#fff" strokeWidth={1.600}><path d="M6 1L2 4.500 6 8" /></svg>
            </div>
            <div className="ml-[4px] flex h-[15px] w-[15px] items-center justify-center bg-[#d84038]">
              <svg width="11" height="11" viewBox="0 0 11 11" fill="none" stroke="#fff" strokeWidth={1.400}><path d="M1 9c3-2 5-6 4-8-2 2 0 6 5 6-3-1-6 0-9 2z" /></svg>
            </div>
            <svg className="ml-[3px]" width="15" height="15" viewBox="0 0 15 15" fill="none" stroke="#62d83a" strokeWidth={1.800}><path d="M1 5c4-4 9-4 13 0M3 8c3-3 6-3 9 0M5 11c2-1 3-1 5 0M7.500 13h.1" /></svg>
            <span className="ml-[7px] text-[11px] text-[#e6f0fa]">18:20</span>
          </div>
        </div>
      </div>

      {/* close tooltip + cursor */}
      <div className="absolute left-[1181px] top-[61px] flex h-[17px] w-[31px] items-center justify-center border border-black bg-[#ffffe1] text-[11px] text-black">Close</div>
      <svg className="absolute left-[1180px] top-[39px]" width="14" height="24" viewBox="0 0 14 24">
        <path d="M1 1v16l4-3 3 7 3-1-3-7h5z" fill="#fff" stroke="#000" />
      </svg>

      {/* balloon */}
      <svg className="absolute left-[1120px] top-[734px]" width="32" height="26" viewBox="0 0 32 26">
        <path d="M7 1L26 21V1" fill="#ffffe1" stroke="#000" />
      </svg>
      <div className="absolute left-[1003px] top-[660px] h-[77px] w-[184px] rounded-[14px] border border-black bg-[#ffffe1] font-['Noto_Sans_CJK_SC',sans-serif] text-[12px] text-black">
        <div className="flex h-[26px] items-center pl-[8px] pt-[6px]">
          <svg width="18" height="18" viewBox="0 0 18 18">
            <circle cx="9" cy="8" r="7.500" fill="#dbe8f8" stroke="#6a90c8" /><path d="M9 7v5M9 4v1.500" stroke="#2a4a9a" strokeWidth={2.200} />
          </svg>
          <span className="ml-[9px] font-bold">通信中心</span>
          <div className="ml-auto mr-[9px] flex h-[15px] w-[15px] items-center justify-center border border-[#888]">
            <svg width="9" height="9" viewBox="0 0 9 9" stroke="#000" strokeWidth={2}><path d="M1 1l7 7M8 1L1 8" /></svg>
          </div>
        </div>
        <div className="mt-[4px] pl-[14px] leading-[18px]">使软件保持最新的简单方法。</div>
        <div className="pl-[15px] leading-[18px] text-[#1414c8] underline">单击此处。</div>
      </div>

      {/* blog watermark */}
      <div className="absolute left-[794px] top-[697px] font-['Noto_Sans_CJK_SC',sans-serif] text-[29px] leading-[36px] text-[#b5141f] [text-shadow:0_0_1px_#5a1018]">小凯的博客与微博</div>
      <div className="absolute left-[800px] top-[733px] scale-y-[1.100] whitespace-nowrap text-[24.400px] font-bold leading-[30px] text-[#b5141f] [text-shadow:0_0_1px_#5a1018]">http://blog.sina.com.cn/keffi</div>
      <div className="absolute left-[799px] top-[763px] scale-y-[1.100] whitespace-nowrap text-[24.400px] font-bold leading-[30px] text-[#a81226] [text-shadow:0_0_1px_#4a1018]">http://t.sina.com.cn/keffi</div>
    </div>
  );
};

export default App;
